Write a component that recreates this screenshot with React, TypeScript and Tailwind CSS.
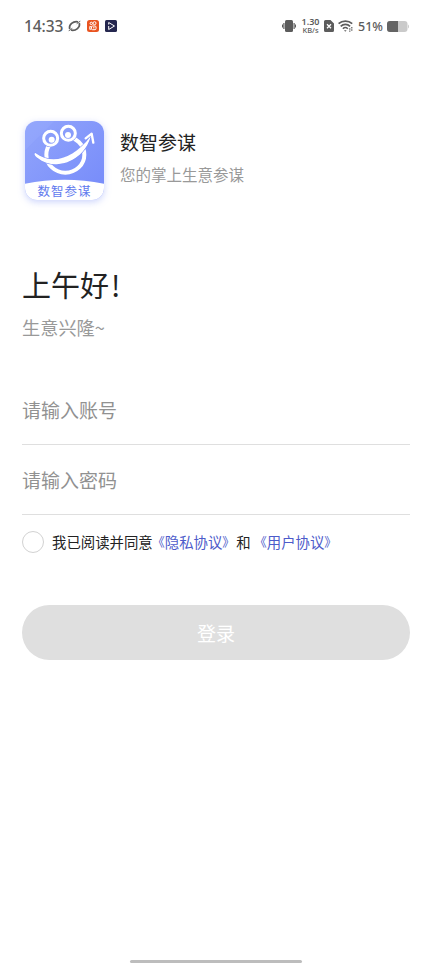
function StatusBar() {
  return (
    <div className="flex h-[52px] items-center justify-between pl-6 pr-[23px] text-[#5c5c5c]">
      <div className="flex items-center">
        <span className="w-[44px] font-['Noto_Sans',sans-serif] text-[15.5px] font-medium leading-5 tracking-[-0.1px]">14:33</span>
        <svg className="h-3 w-[13px]" viewBox="0 0 13 12" fill="none" stroke="currentColor" strokeLinecap="round">
          <path d="M1.600 8.500C.8 4.500 5 1.200 9.500 1.800M11.400 3.500C12.200 7.500 8 10.800 3.500 10.200" strokeWidth="1.700" />
          <path d="M1 10.800C2 9.500 2.800 9.300 4 8.500M12 1.200C11 2.500 10.200 2.700 9 3.500" strokeWidth="1" />
        </svg>
        <svg className="ml-[6px] h-3 w-3" viewBox="0 0 12 12" fill="none">
          <rect width="12" height="12" rx="2.500" fill="#e95420" />
          <g stroke="#fff" strokeWidth="1">
            <circle cx="4.300" cy="3.400" r="1.200" />
            <circle cx="7.500" cy="3.200" r="1.500" />
            <rect x="4.500" y="6" width="4.500" height="3.700" rx="1" />
            <path d="M4.500 7 2.800 6.400v3l1.700-.6M6 7.800h1.500" />
          </g>
        </svg>
        <svg className="ml-[6px] h-3 w-3" viewBox="0 0 12 12" fill="none">
          <rect width="12" height="12" rx="1.500" fill="#25274f" />
          <path d="M3.700 4.500V2.500L9.500 6 3.700 9.500V6" stroke="#fff" strokeWidth="1" />
        </svg>
      </div>
      <div className="flex items-center">
        <svg className="h-3 w-[14px]" viewBox="0 0 14 12" fill="currentColor">
          <rect x="3" width="8" height="12" rx="1.500" />
          <path d="M1.300 3H2.500V9H1.300zM0 4.500H1V7.500H0zM11.500 3h1.200v6h-1.200zM13 4.500h1v3h-1z" />
        </svg>
        <div className="ml-[4px] w-[21px] whitespace-nowrap text-center font-['Noto_Sans',sans-serif] font-semibold leading-[8px]">
          <div className="text-[9px]">1.30</div>
          <div className="text-[7.5px] font-medium">KB/s</div>
        </div>
        <svg className="ml-[3px] h-3 w-[10px]" viewBox="0 0 10 12">
          <path d="M1.500 0H6.500L10 3.500v7A1.500 1.500 0 0 1 8.500 12h-7A1.500 1.500 0 0 1 0 10.500v-9A1.500 1.500 0 0 1 1.500 0z" fill="currentColor" />
          <path d="m3 4.200 4 4m0-4-4 4" stroke="#fff" strokeWidth="1.300" />
        </svg>
        <svg className="ml-1 h-3 w-4" viewBox="0 0 16 12" fill="none" stroke="currentColor">
          <path d="M.6 3.700a10 10 0 0 1 13.600 0M2.700 6.300a6.700 6.700 0 0 1 9.400 0" strokeWidth="1.700" />
          <path d="M4.900 8.700a3.500 3.500 0 0 1 4.900 0" strokeWidth="1.600" />
          <path d="m6 10.200 1.300 1.600 1.300-1.600z" fill="currentColor" stroke="none" />
          <path d="M11.800 8.200v3.500M13.800 7v3.800" strokeWidth="1.200" strokeDasharray="1.500 .8" />
        </svg>
        <span className="ml-1 mt-[1px] w-[25px] whitespace-nowrap font-['Noto_Sans',sans-serif] text-[12.5px] font-medium leading-5">51%</span>
        <svg className="ml-[4px] h-[11px] w-[22px]" viewBox="0 0 22 11">
          <path d="M3 0h14.500a3 3 0 0 1 3 3v5a3 3 0 0 1-3 3H3a3 3 0 0 1-3-3V3a3 3 0 0 1 3-3z" fill="#cacaca" />
          <path d="M3 0h8v11H3a3 3 0 0 1-3-3V3a3 3 0 0 1 3-3z" fill="#646464" />
          <path d="M21 3.500q1 .5 1 2t-1 2z" fill="#cacaca" />
        </svg>
      </div>
    </div>
  )
}

function Logo() {
  return (
    <div className="relative h-[79px] w-[79px] overflow-hidden rounded-[12px] shadow-[0_2px_7px_rgba(105,130,245,0.35)]">
      <svg className="h-full w-full" viewBox="0 0 237 237" fill="none">
        <defs>
          <linearGradient id="logo-bg" x1="0" y1="0" x2="1" y2="1">
            <stop offset="0" stopColor="#92a5fb" />
            <stop offset="1" stopColor="#758afa" />
          </linearGradient>
        </defs>
        <rect width="237" height="237" fill="url(#logo-bg)" />
        <path d="M0 88 88 0H0z" fill="#9bafff" opacity=".3" />
        <path d="M0 188Q118 164 237 188V237H0z" fill="#fff" />
        {/* face outline */}
        <ellipse cx="121" cy="101" rx="57" ry="54" stroke="#fff" strokeWidth="12" />
        {/* smile swoosh with the arrow tip */}
        <path d="M31 96C80 133 144 116 197 46C178 120 92 154 37 110C29 104 26 98 31 96z" fill="#fff" stroke="#8095fa" strokeWidth="4" />
        <path d="M31 96C80 133 144 116 197 46C178 120 92 154 37 110C29 104 26 98 31 96z" fill="#fff" />
        <path d="M182 52 200 38 205 65" stroke="#fff" strokeWidth="7" strokeLinejoin="round" strokeLinecap="round" />
        {/* eyes */}
        <circle cx="104" cy="42" r="18" fill="#899dfb" />
        <circle cx="77" cy="52" r="27" fill="#899dfb" />
        <circle cx="130" cy="37" r="27" fill="#899dfb" />
        <circle cx="77" cy="52" r="21" stroke="#fff" strokeWidth="9" />
        <circle cx="130" cy="37" r="21" stroke="#fff" strokeWidth="9" />
        <circle cx="80" cy="56" r="9" fill="#fff" />
        <circle cx="129" cy="42" r="9" fill="#fff" />
      </svg>
      <span className="absolute inset-x-0 bottom-[2px] text-center text-[12.500px] leading-[14px] tracking-[1px] text-[#6079ee]">数智参谋</span>
    </div>
  )
}

function AgreementLink({ title }: { title: string }) {
  return (
    <a className="flex items-center text-[#4d5bca]">
      <span className="flex w-[9px] justify-end text-[12.500px]">《</span>
      <span>{title}</span>
      <span className="w-[9px] text-[12.500px]">》</span>
    </a>
  )
}

export default function App() {
  return (
    <div className="flex h-[964px] w-[432px] flex-col bg-white font-['Noto_Sans_CJK_SC',sans-serif] text-[#222]">
      <StatusBar />
      <main className="px-[22px]">
        <header className="mt-[69px] flex pl-[3px]">
          <Logo />
          <div className="ml-4 pt-[7px]">
            <h1 className="text-[19px] leading-7">数智参谋</h1>
            <p className="mt-[6px] text-[15.500px] leading-6 text-[#999]">您的掌上生意参谋</p>
          </div>
        </header>

        <h2 className="mt-[64px] text-[29px] leading-10">上午好<span className="ml-[2px]">!</span></h2>
        <p className="mt-[9px] text-[18.200px] leading-7 text-[#999]">生意兴隆~</p>

        <form className="mt-[34px]">
          <input
            type="text"
            aria-label="账号"
            placeholder="请输入账号"
            className="block h-[70px] w-full border-b border-[#dfdfdf] text-[19px] outline-none placeholder:text-[#919191]"
          />
          <input
            type="password"
            aria-label="密码"
            placeholder="请输入密码"
            className="block h-[70px] w-full border-b border-[#dfdfdf] text-[19px] outline-none placeholder:text-[#919191]"
          />
          <div className="mt-[15px] flex h-6 items-center whitespace-nowrap text-[14.400px] [font-feature-settings:'halt']">
            <button type="button" aria-label="同意" className="mr-2 h-[22px] w-[22px] rounded-full border border-[#d2d2d2]" />
            <span className="mr-[3px]">我已阅读并同意</span>
            <AgreementLink title="隐私协议" />
            <span className="ml-[5px] mr-[7px]">和</span>
            <AgreementLink title="用户协议" />
          </div>
          <button type="button" className="mt-[51px] h-[55px] w-full rounded-full bg-[#dfdfdf] pt-[2px] text-[19px] text-white">登录</button>
        </form>
      </main>
      <div className="mx-auto mb-[1px] mt-auto h-[3px] w-[172px] rounded-full bg-[#bdbdbd]" />
    </div>
  )
}
